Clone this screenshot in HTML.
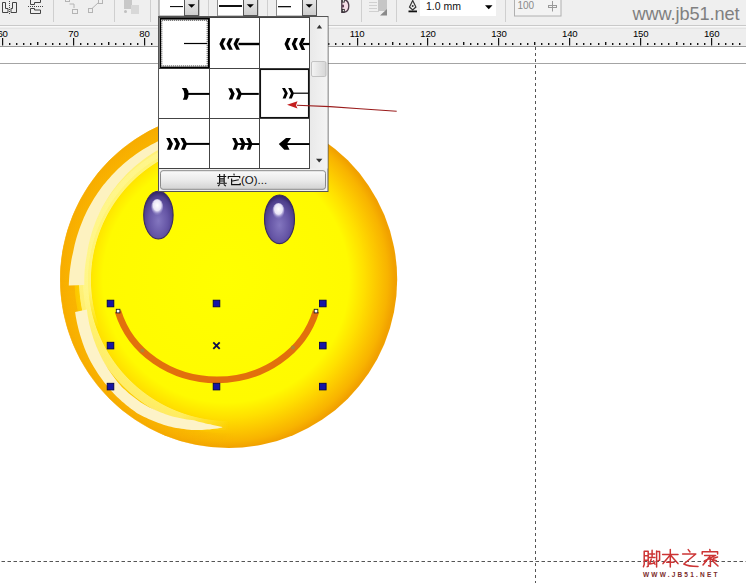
<!DOCTYPE html>
<html><head><meta charset="utf-8">
<style>
html,body{margin:0;padding:0;}
body{width:746px;height:583px;overflow:hidden;position:relative;background:#fff;font-family:"Liberation Sans",sans-serif;}
svg{position:absolute;left:0;top:0;display:block;}
</style></head><body>
<svg width="746" height="583" viewBox="0 0 746 583" style="font-family:'Liberation Sans',sans-serif">
<defs>
  <radialGradient id="face" cx="226" cy="279.5" r="168.5" gradientUnits="userSpaceOnUse">
    <stop offset="0" stop-color="#ffff00"/>
    <stop offset="0.73" stop-color="#fffa00"/>
    <stop offset="0.82" stop-color="#ffe000"/>
    <stop offset="0.9" stop-color="#fcc600"/>
    <stop offset="0.96" stop-color="#f8b300"/>
    <stop offset="1" stop-color="#f1a100"/>
  </radialGradient>
  <linearGradient id="ddbtn" x1="0" y1="0" x2="0" y2="1">
    <stop offset="0" stop-color="#e8e8e8"/>
    <stop offset="1" stop-color="#cdcdcd"/>
  </linearGradient>
</defs>

<!-- toolbar -->
<rect x="0" y="0" width="746" height="25" fill="#efefef"/>
<rect x="0" y="25" width="746" height="1" fill="#c9c9c9"/>
<rect x="0" y="26" width="746" height="1" fill="#f9f9f9"/>

<!-- toolbar icons -->
<g fill="none" stroke="#444" stroke-width="1">
  <path d="M2.5,2.5 H5.5 V8.5 H8 V12.5 H2.5 Z"/>
  <path d="M16.5,2.5 H12.5 V8.5 H11 V12.5 H16.5 Z"/>
  <path d="M9.5,1 V14" stroke-dasharray="1 1"/>
  <path d="M30.5,-1 V4.5 H34.5 V2.5 H40.5 V-1"/>
  <path d="M28,6.5 H43" stroke-dasharray="1 1"/>
  <path d="M30.5,8.5 H34.5 V10 H40.5 V13.5 H30.5 Z"/>
</g>
<g stroke="#cfcfcf" stroke-width="1"><path d="M53.5,0 V22 M114.5,0 V22 M150.5,0 V22 M208.5,0 V16 M258.5,0 V16 M267.5,0 V16 M361.5,0 V22 M396.5,0 V22 M505.5,0 V22"/></g>
<g fill="none" stroke="#b4b4b4" stroke-width="1">
  <rect x="65.5" y="-2.5" width="4" height="4"/>
  <path d="M69.5,4 H74 V8"/>
  <rect x="72.5" y="9.5" width="5" height="4"/>
  <rect x="88.5" y="8.5" width="4" height="4"/>
  <rect x="98.5" y="-0.5" width="4" height="4"/>
  <path d="M92,8.5 L98.5,2.5"/>
</g>
<g fill="#c8c8c8"><rect x="124" y="0" width="8" height="9"/><rect x="131" y="5" width="8" height="9" fill="#d8d8d8"/><circle cx="125.5" cy="11.5" r="1.5" fill="#c0c0c0"/></g>

<!-- dropdowns -->
<rect x="159" y="-1" width="40" height="17" fill="#fff" stroke="#8c8c8c" stroke-width="1"/>
<rect x="170" y="6" width="13" height="1.1" fill="#111"/>
<rect x="184.5" y="-1" width="14" height="16.5" fill="url(#ddbtn)" stroke="#555" stroke-width="1"/>
<path d="M188,4.3 H195.2 L191.6,7.8 Z" fill="#000"/>

<rect x="217.5" y="-1" width="40" height="17" fill="#fff" stroke="#8c8c8c" stroke-width="1"/>
<rect x="219" y="5" width="23" height="2" fill="#111"/>
<rect x="243.5" y="-1" width="14" height="16.5" fill="url(#ddbtn)" stroke="#555" stroke-width="1"/>
<path d="M246.7,4.3 H253.9 L250.3,7.8 Z" fill="#000"/>

<rect x="276.5" y="-1" width="40" height="17" fill="#fff" stroke="#8c8c8c" stroke-width="1"/>
<rect x="278" y="6" width="13" height="1.3" fill="#111"/>
<rect x="302.5" y="-1" width="14" height="16.5" fill="url(#ddbtn)" stroke="#555" stroke-width="1"/>
<path d="M305.6,4.3 H312.8 L309.2,7.8 Z" fill="#000"/>

<!-- misc toolbar -->
<path d="M341.8,-0.5 V12.3 H344 Q348.8,11.5 348.8,6 Q348.8,0.5 344,-0.5 Z" fill="#f3dde6" stroke="#4a3a48" stroke-width="1.3"/>
<rect x="342.3" y="-0.5" width="2" height="2.6" fill="#fff" stroke="#2a2a2a" stroke-width="0.9"/>
<rect x="342.3" y="9.4" width="2" height="2.4" fill="#fff" stroke="#2a2a2a" stroke-width="0.9"/>
<ellipse cx="343" cy="6" rx="1.1" ry="1.6" fill="#5a3a50"/>
<g fill="#c6c6c6"><rect x="378" y="0" width="9" height="11"/><path d="M380,15.5 L387,9 L387,15.5 Z" fill="#8a8a8a"/></g>
<g stroke="#d0d0d0"><path d="M369,2.5 H377 M369,5.5 H377 M369,8.5 H377 M369,11.5 H379"/></g>
<path d="M412.7,0.5 L409.5,7 L412.7,10 L415.9,7 Z" fill="none" stroke="#333" stroke-width="1.2"/>
<circle cx="412.7" cy="6" r="1" fill="#333"/>
<rect x="408.5" y="10.5" width="8.5" height="1.8" fill="#111"/>
<rect x="420" y="-1" width="76" height="17" fill="#fff"/>
<text x="426" y="10.2" font-size="10.5" fill="#111">1.0 mm</text>
<path d="M485,5.3 H492.5 L488.75,9.2 Z" fill="#000"/>
<rect x="514.5" y="-1" width="46.5" height="17" fill="#f3f3f3" stroke="#b0b0b0" stroke-width="1"/>
<text x="517.5" y="8.8" font-size="10" fill="#8a8a8a">100</text>
<g stroke="#999" stroke-width="1" fill="none"><path d="M552.5,1 V11.5"/><rect x="548.5" y="5.5" width="8" height="2"/></g>

<text x="632.5" y="19.6" font-size="18.2" fill="#808080" letter-spacing="-0.1">www.jb51.net</text>

<!-- ruler -->
<rect x="0" y="27" width="746" height="19" fill="#eeeeee"/>
<rect x="0" y="28" width="746" height="1" fill="#e4e4e4"/>
<rect x="0" y="46" width="746" height="1" fill="#999999"/>
<g font-size="9.6" fill="#000" letter-spacing="-0.2">
<text x="2.6" y="36.9" text-anchor="middle">60</text>
<text x="73.5" y="36.9" text-anchor="middle">70</text>
<text x="144.4" y="36.9" text-anchor="middle">80</text>
<text x="215.3" y="36.9" text-anchor="middle">90</text>
<text x="286.2" y="36.9" text-anchor="middle">100</text>
<text x="357.1" y="36.9" text-anchor="middle">110</text>
<text x="428.0" y="36.9" text-anchor="middle">120</text>
<text x="498.9" y="36.9" text-anchor="middle">130</text>
<text x="569.8" y="36.9" text-anchor="middle">140</text>
<text x="640.7" y="36.9" text-anchor="middle">150</text>
<text x="711.6" y="36.9" text-anchor="middle">160</text>
</g>
<rect x="2" y="38" width="1.2" height="7.5" fill="#111"/>
<rect x="9" y="43" width="1.4" height="2" fill="#111"/>
<rect x="16" y="43" width="1.4" height="2" fill="#111"/>
<rect x="23" y="43" width="1.4" height="2" fill="#111"/>
<rect x="30" y="43" width="1.4" height="2" fill="#111"/>
<rect x="37" y="42" width="1.4" height="3" fill="#111"/>
<rect x="45" y="43" width="1.4" height="2" fill="#111"/>
<rect x="52" y="43" width="1.4" height="2" fill="#111"/>
<rect x="59" y="43" width="1.4" height="2" fill="#111"/>
<rect x="66" y="43" width="1.4" height="2" fill="#111"/>
<rect x="73" y="38" width="1.2" height="7.5" fill="#111"/>
<rect x="80" y="43" width="1.4" height="2" fill="#111"/>
<rect x="87" y="43" width="1.4" height="2" fill="#111"/>
<rect x="94" y="43" width="1.4" height="2" fill="#111"/>
<rect x="101" y="43" width="1.4" height="2" fill="#111"/>
<rect x="108" y="42" width="1.4" height="3" fill="#111"/>
<rect x="115" y="43" width="1.4" height="2" fill="#111"/>
<rect x="123" y="43" width="1.4" height="2" fill="#111"/>
<rect x="130" y="43" width="1.4" height="2" fill="#111"/>
<rect x="137" y="43" width="1.4" height="2" fill="#111"/>
<rect x="144" y="38" width="1.2" height="7.5" fill="#111"/>
<rect x="151" y="43" width="1.4" height="2" fill="#111"/>
<rect x="158" y="43" width="1.4" height="2" fill="#111"/>
<rect x="165" y="43" width="1.4" height="2" fill="#111"/>
<rect x="172" y="43" width="1.4" height="2" fill="#111"/>
<rect x="179" y="42" width="1.4" height="3" fill="#111"/>
<rect x="186" y="43" width="1.4" height="2" fill="#111"/>
<rect x="193" y="43" width="1.4" height="2" fill="#111"/>
<rect x="201" y="43" width="1.4" height="2" fill="#111"/>
<rect x="208" y="43" width="1.4" height="2" fill="#111"/>
<rect x="215" y="38" width="1.2" height="7.5" fill="#111"/>
<rect x="222" y="43" width="1.4" height="2" fill="#111"/>
<rect x="229" y="43" width="1.4" height="2" fill="#111"/>
<rect x="236" y="43" width="1.4" height="2" fill="#111"/>
<rect x="243" y="43" width="1.4" height="2" fill="#111"/>
<rect x="250" y="42" width="1.4" height="3" fill="#111"/>
<rect x="257" y="43" width="1.4" height="2" fill="#111"/>
<rect x="264" y="43" width="1.4" height="2" fill="#111"/>
<rect x="271" y="43" width="1.4" height="2" fill="#111"/>
<rect x="279" y="43" width="1.4" height="2" fill="#111"/>
<rect x="286" y="38" width="1.2" height="7.5" fill="#111"/>
<rect x="293" y="43" width="1.4" height="2" fill="#111"/>
<rect x="300" y="43" width="1.4" height="2" fill="#111"/>
<rect x="307" y="43" width="1.4" height="2" fill="#111"/>
<rect x="314" y="43" width="1.4" height="2" fill="#111"/>
<rect x="321" y="42" width="1.4" height="3" fill="#111"/>
<rect x="328" y="43" width="1.4" height="2" fill="#111"/>
<rect x="335" y="43" width="1.4" height="2" fill="#111"/>
<rect x="342" y="43" width="1.4" height="2" fill="#111"/>
<rect x="349" y="43" width="1.4" height="2" fill="#111"/>
<rect x="357" y="38" width="1.2" height="7.5" fill="#111"/>
<rect x="364" y="43" width="1.4" height="2" fill="#111"/>
<rect x="371" y="43" width="1.4" height="2" fill="#111"/>
<rect x="378" y="43" width="1.4" height="2" fill="#111"/>
<rect x="385" y="43" width="1.4" height="2" fill="#111"/>
<rect x="392" y="42" width="1.4" height="3" fill="#111"/>
<rect x="399" y="43" width="1.4" height="2" fill="#111"/>
<rect x="406" y="43" width="1.4" height="2" fill="#111"/>
<rect x="413" y="43" width="1.4" height="2" fill="#111"/>
<rect x="420" y="43" width="1.4" height="2" fill="#111"/>
<rect x="427" y="38" width="1.2" height="7.5" fill="#111"/>
<rect x="434" y="43" width="1.4" height="2" fill="#111"/>
<rect x="442" y="43" width="1.4" height="2" fill="#111"/>
<rect x="449" y="43" width="1.4" height="2" fill="#111"/>
<rect x="456" y="43" width="1.4" height="2" fill="#111"/>
<rect x="463" y="42" width="1.4" height="3" fill="#111"/>
<rect x="470" y="43" width="1.4" height="2" fill="#111"/>
<rect x="477" y="43" width="1.4" height="2" fill="#111"/>
<rect x="484" y="43" width="1.4" height="2" fill="#111"/>
<rect x="491" y="43" width="1.4" height="2" fill="#111"/>
<rect x="498" y="38" width="1.2" height="7.5" fill="#111"/>
<rect x="505" y="43" width="1.4" height="2" fill="#111"/>
<rect x="512" y="43" width="1.4" height="2" fill="#111"/>
<rect x="520" y="43" width="1.4" height="2" fill="#111"/>
<rect x="527" y="43" width="1.4" height="2" fill="#111"/>
<rect x="534" y="42" width="1.4" height="3" fill="#111"/>
<rect x="541" y="43" width="1.4" height="2" fill="#111"/>
<rect x="548" y="43" width="1.4" height="2" fill="#111"/>
<rect x="555" y="43" width="1.4" height="2" fill="#111"/>
<rect x="562" y="43" width="1.4" height="2" fill="#111"/>
<rect x="569" y="38" width="1.2" height="7.5" fill="#111"/>
<rect x="576" y="43" width="1.4" height="2" fill="#111"/>
<rect x="583" y="43" width="1.4" height="2" fill="#111"/>
<rect x="590" y="43" width="1.4" height="2" fill="#111"/>
<rect x="598" y="43" width="1.4" height="2" fill="#111"/>
<rect x="605" y="42" width="1.4" height="3" fill="#111"/>
<rect x="612" y="43" width="1.4" height="2" fill="#111"/>
<rect x="619" y="43" width="1.4" height="2" fill="#111"/>
<rect x="626" y="43" width="1.4" height="2" fill="#111"/>
<rect x="633" y="43" width="1.4" height="2" fill="#111"/>
<rect x="640" y="38" width="1.2" height="7.5" fill="#111"/>
<rect x="647" y="43" width="1.4" height="2" fill="#111"/>
<rect x="654" y="43" width="1.4" height="2" fill="#111"/>
<rect x="661" y="43" width="1.4" height="2" fill="#111"/>
<rect x="668" y="43" width="1.4" height="2" fill="#111"/>
<rect x="676" y="42" width="1.4" height="3" fill="#111"/>
<rect x="683" y="43" width="1.4" height="2" fill="#111"/>
<rect x="690" y="43" width="1.4" height="2" fill="#111"/>
<rect x="697" y="43" width="1.4" height="2" fill="#111"/>
<rect x="704" y="43" width="1.4" height="2" fill="#111"/>
<rect x="711" y="38" width="1.2" height="7.5" fill="#111"/>
<rect x="718" y="43" width="1.4" height="2" fill="#111"/>
<rect x="725" y="43" width="1.4" height="2" fill="#111"/>
<rect x="732" y="43" width="1.4" height="2" fill="#111"/>
<rect x="739" y="43" width="1.4" height="2" fill="#111"/>
<rect x="746" y="42" width="1.4" height="3" fill="#111"/>

<!-- canvas lines -->
<rect x="0" y="63" width="746" height="1" fill="#a4a4a4"/>
<line x1="535.5" y1="47" x2="535.5" y2="583" stroke="#555" stroke-width="1" stroke-dasharray="3 3"/>
<line x1="1.5" y1="561.5" x2="746" y2="561.5" stroke="#555" stroke-width="1" stroke-dasharray="3.5 2.5"/>

<!-- smiley -->
<circle cx="228.7" cy="279.5" r="168.5" fill="url(#face)"/>
</svg>
<div style="position:absolute;left:58.10px;top:108.90px;width:341.20px;height:341.20px;background:conic-gradient(rgba(248,174,0,0.4) 2.0deg, rgba(248,174,0,0) 20.0deg, rgba(248,174,0,0) 89.9deg, rgba(248,174,0,0) 90.0deg, rgba(248,174,0,0) 178.0deg, rgba(248,174,0,0.6) 205.0deg, rgba(248,174,0,0.75) 270.0deg, rgba(248,174,0,0.75) 330.0deg);-webkit-mask-image:radial-gradient(circle at center, transparent 153.60px, #000 154.40px, #000 168.20px, transparent 169.00px);mask-image:radial-gradient(circle at center, transparent 153.60px, #000 154.40px, #000 168.20px, transparent 169.00px);"></div>
<div style="position:absolute;left:80.70px;top:131.50px;width:296.00px;height:296.00px;background:conic-gradient(rgba(255,246,140,0.85) 0.0deg, rgba(255,246,140,0) 20.0deg, rgba(255,246,140,0) 89.9deg, rgba(255,246,140,0) 90.0deg, rgba(255,246,140,0) 250.0deg, rgba(255,246,140,0.85) 266.0deg);-webkit-mask-image:radial-gradient(circle at center, transparent 137.60px, #000 138.40px, #000 145.60px, transparent 146.40px);mask-image:radial-gradient(circle at center, transparent 137.60px, #000 138.40px, #000 145.60px, transparent 146.40px);"></div>
<div style="position:absolute;left:76.70px;top:127.50px;width:304.00px;height:304.00px;background:conic-gradient(rgba(255,246,140,0) 89.9deg, rgba(255,246,140,0) 90.0deg, rgba(255,246,140,0) 180.0deg, rgba(255,246,140,0.7) 200.0deg, rgba(255,246,140,0.8) 258.0deg, rgba(255,246,140,0.85) 266.0deg);-webkit-mask-image:radial-gradient(circle at center, transparent 140.60px, #000 141.40px, #000 149.60px, transparent 150.40px);mask-image:radial-gradient(circle at center, transparent 140.60px, #000 141.40px, #000 149.60px, transparent 150.40px);"></div>
<svg width="746" height="583" viewBox="0 0 746 583" style="font-family:'Liberation Sans',sans-serif">
<defs>
  <radialGradient id="eye" cx="0.5" cy="0.62" r="0.6">
    <stop offset="0" stop-color="#8376bf"/>
    <stop offset="0.55" stop-color="#6555a5"/>
    <stop offset="0.85" stop-color="#4e3f8c"/>
    <stop offset="1" stop-color="#34266a"/>
  </radialGradient>
  <radialGradient id="eyehl" cx="0.5" cy="0.4" r="0.55">
    <stop offset="0" stop-color="#ffffff"/>
    <stop offset="0.6" stop-color="#e8e4f6"/>
    <stop offset="1" stop-color="#b0a8dc" stop-opacity="0.2"/>
  </radialGradient>
  <linearGradient id="btn" x1="0" y1="0" x2="0" y2="1">
    <stop offset="0" stop-color="#fafafa"/>
    <stop offset="0.5" stop-color="#ebebeb"/>
    <stop offset="1" stop-color="#d2d2d2"/>
  </linearGradient>
  <linearGradient id="sb" x1="0" y1="0" x2="1" y2="0">
    <stop offset="0" stop-color="#e9e9e9"/>
    <stop offset="1" stop-color="#f4f4f4"/>
  </linearGradient>
  <linearGradient id="thumb" x1="0" y1="0" x2="1" y2="0">
    <stop offset="0" stop-color="#f4f4f4"/>
    <stop offset="1" stop-color="#d6d6d6"/>
  </linearGradient>
</defs>
<path d="M68.8,285.6 L68.9,282.4 L69.1,279.2 L69.3,276.0 L69.6,272.8 L70.0,269.6 L70.4,266.4 L70.9,263.3 L71.4,260.1 L72.0,257.0 L72.7,253.9 L73.4,250.8 L74.0,247.7 L74.7,244.6 L75.5,241.5 L76.3,238.4 L77.2,235.4 L78.2,232.4 L79.2,229.4 L80.3,226.4 L81.5,223.4 L82.7,220.5 L83.9,217.6 L85.2,214.7 L86.6,211.8 L88.0,209.0 L89.5,206.2 L91.1,203.5 L92.7,200.7 L94.3,198.0 L96.0,195.4 L97.8,192.8 L99.6,190.2 L101.5,187.6 L103.4,185.1 L105.4,182.7 L107.4,180.2 L109.5,177.9 L111.6,175.5 L113.8,173.3 L116.0,171.0 L118.2,168.8 L120.5,166.7 L122.9,164.6 L125.2,162.5 L127.7,160.5 L130.1,158.6 L132.6,156.7 L135.2,154.8 L137.7,153.0 L140.3,151.3 L143.0,149.6 L145.6,147.9 L148.3,146.4 L151.1,144.8 L153.8,143.4 L156.6,141.9 L159.4,140.6 L162.3,139.3 L165.1,138.0 L168.0,136.8 L170.9,135.7 L173.8,134.6 L176.8,133.6 L179.7,132.6 L182.7,131.7 L185.7,130.9 L188.7,130.1 L191.7,129.3 L194.8,128.7 L197.8,128.1 L200.9,127.5 L204.0,127.1 L207.0,126.7 L210.1,126.3 L213.2,126.0 L216.3,125.8 L219.4,125.6 L222.5,125.5 L225.6,125.5 L228.7,125.5 L228.7,131.5 L225.7,131.5 L222.7,131.6 L219.8,131.8 L216.8,132.0 L213.8,132.3 L210.9,132.7 L207.9,133.1 L205.0,133.5 L202.1,134.0 L199.2,134.6 L196.3,135.3 L193.4,135.9 L190.5,136.7 L187.6,137.5 L184.8,138.4 L182.0,139.3 L179.1,140.3 L176.4,141.3 L173.6,142.4 L170.9,143.6 L168.1,144.8 L165.4,146.0 L162.8,147.4 L160.2,148.8 L157.6,150.2 L155.0,151.7 L152.5,153.3 L150.0,154.9 L147.6,156.6 L145.2,158.3 L142.8,160.1 L140.4,161.9 L138.1,163.7 L135.9,165.6 L133.6,167.6 L131.5,169.5 L129.3,171.6 L127.2,173.6 L125.1,175.8 L123.1,177.9 L121.2,180.1 L119.2,182.3 L117.3,184.6 L115.5,186.9 L113.7,189.2 L112.0,191.6 L110.3,194.0 L108.7,196.4 L107.1,198.9 L105.6,201.4 L104.1,204.0 L102.7,206.5 L101.3,209.1 L100.0,211.8 L98.8,214.4 L97.6,217.1 L96.4,219.8 L95.3,222.5 L94.3,225.2 L93.3,227.9 L92.4,230.7 L91.5,233.5 L90.7,236.3 L90.0,239.1 L89.3,241.9 L88.6,244.7 L88.1,247.6 L87.5,250.4 L87.1,253.3 L86.6,256.2 L86.1,259.0 L85.7,261.9 L85.3,264.8 L85.0,267.6 L84.7,270.5 L84.5,273.4 L84.4,276.3 L84.3,279.2 L84.3,282.1 L84.3,285.0 Z" fill="#fdf2c0"/>
<path d="M222.2,427.6 L219.8,428.0 L217.3,428.4 L214.8,428.8 L212.2,429.1 L209.7,429.4 L207.2,429.6 L204.6,429.8 L202.0,429.9 L199.5,430.0 L196.9,430.0 L194.3,430.0 L191.7,429.9 L189.1,429.7 L186.5,429.4 L183.9,429.1 L181.4,428.7 L178.8,428.3 L176.2,427.9 L173.6,427.4 L171.0,426.8 L168.5,426.2 L166.0,425.5 L163.4,424.7 L160.9,423.8 L158.5,422.9 L156.0,422.0 L153.5,421.0 L151.1,420.0 L148.6,418.9 L146.2,417.8 L143.8,416.7 L141.4,415.5 L139.0,414.3 L136.7,412.9 L134.6,411.3 L132.4,409.8 L130.3,408.2 L128.2,406.5 L126.1,404.9 L124.0,403.1 L122.0,401.4 L120.0,399.6 L118.0,397.8 L116.1,396.0 L114.2,394.1 L112.4,392.1 L110.6,390.2 L108.9,388.1 L107.2,386.1 L105.5,384.0 L103.9,381.9 L102.3,379.8 L100.7,377.6 L99.2,375.4 L97.7,373.2 L96.3,371.0 L94.9,368.8 L93.5,366.5 L92.2,364.2 L90.9,361.9 L89.6,359.6 L88.5,357.2 L87.4,354.8 L86.3,352.4 L85.3,349.9 L84.3,347.5 L83.4,345.0 L82.5,342.5 L81.7,340.0 L80.9,337.6 L80.1,335.0 L79.4,332.5 L78.7,330.0 L78.1,327.5 L77.5,324.9 L76.9,322.4 L76.4,319.8 L75.9,317.3 L75.5,314.7 L75.1,312.1 L86.9,309.6 L87.2,312.0 L87.5,314.4 L87.9,316.8 L88.4,319.1 L88.8,321.5 L89.3,323.9 L89.9,326.2 L90.5,328.6 L91.1,330.9 L91.8,333.3 L92.5,335.6 L93.2,337.9 L94.0,340.2 L94.9,342.5 L95.7,344.8 L96.6,347.1 L97.6,349.3 L98.6,351.6 L99.6,353.8 L100.7,356.0 L101.8,358.2 L103.0,360.4 L104.2,362.5 L105.5,364.7 L106.8,366.8 L108.1,368.9 L109.5,370.9 L110.9,373.0 L112.3,375.0 L113.8,377.0 L115.3,379.0 L116.8,381.0 L118.4,382.9 L120.0,384.8 L121.6,386.7 L123.4,388.4 L125.3,390.1 L127.1,391.7 L129.0,393.4 L131.0,395.0 L132.9,396.5 L134.9,398.1 L136.9,399.6 L138.9,401.0 L140.9,402.4 L143.0,403.8 L145.1,405.1 L147.3,406.3 L149.5,407.4 L151.8,408.5 L154.0,409.5 L156.3,410.6 L158.6,411.5 L160.9,412.4 L163.2,413.3 L165.5,414.2 L167.8,415.0 L170.1,415.8 L172.5,416.5 L174.8,417.1 L177.2,417.6 L179.6,418.1 L182.0,418.6 L184.4,419.0 L186.9,419.4 L189.3,419.7 L191.7,420.0 L194.0,420.3 L196.3,421.0 L198.6,421.7 L201.0,422.3 L203.3,422.8 L205.6,423.4 L208.0,423.9 L210.4,424.3 L212.7,424.9 L215.1,425.5 L217.5,426.0 L219.9,426.5 L222.3,427.0 Z" fill="#fdf3c8"/>
<ellipse cx="158.4" cy="215.1" rx="14.7" ry="23.9" fill="url(#eye)" stroke="#3a2a60" stroke-width="1.1"/>
<ellipse cx="157.2" cy="207" rx="6" ry="8" fill="url(#eyehl)"/>
<ellipse cx="279.5" cy="219.3" rx="15" ry="24.3" fill="url(#eye)" stroke="#3a2a60" stroke-width="1.1"/>
<ellipse cx="278.5" cy="210.7" rx="6" ry="7.8" fill="url(#eyehl)"/>

<path d="M118,311.2 A102.7,93.5 0 0 0 316,311.2" fill="none" stroke="#e2700c" stroke-width="6.6"/>
<rect x="116.3" y="309.3" width="3.6" height="3.6" fill="#fff" stroke="#222" stroke-width="0.9"/>
<rect x="314.2" y="309.3" width="3.6" height="3.6" fill="#fff" stroke="#222" stroke-width="0.9"/>
<rect x="140.5" y="348.7" width="3.6" height="3.6" fill="#a08a40" opacity="0.85"/>
<rect x="291.2" y="345.8" width="3.6" height="3.6" fill="#a08a40" opacity="0.85"/>
<rect x="107.2" y="300.2" width="6.6" height="6.6" fill="#1515a6" stroke="#00004a" stroke-width="0.9"/>
<rect x="107.2" y="342.3" width="6.6" height="6.6" fill="#1515a6" stroke="#00004a" stroke-width="0.9"/>
<rect x="107.2" y="383.3" width="6.6" height="6.6" fill="#1515a6" stroke="#00004a" stroke-width="0.9"/>
<rect x="213.2" y="300.2" width="6.6" height="6.6" fill="#1515a6" stroke="#00004a" stroke-width="0.9"/>
<rect x="213.2" y="383.3" width="6.6" height="6.6" fill="#1515a6" stroke="#00004a" stroke-width="0.9"/>
<rect x="319.5" y="300.2" width="6.6" height="6.6" fill="#1515a6" stroke="#00004a" stroke-width="0.9"/>
<rect x="319.5" y="342.3" width="6.6" height="6.6" fill="#1515a6" stroke="#00004a" stroke-width="0.9"/>
<rect x="319.5" y="383.3" width="6.6" height="6.6" fill="#1515a6" stroke="#00004a" stroke-width="0.9"/>
<path d="M213.3,342.4 L219.7,348.8 M219.7,342.4 L213.3,348.8" stroke="#10104a" stroke-width="1.9"/>

<!-- popup -->
<rect x="158.5" y="16.5" width="169.5" height="175" fill="#f0f0f0" stroke="#555" stroke-width="1"/>
<rect x="159" y="17.5" width="150.5" height="151" fill="#fff"/>
<g stroke="#444" stroke-width="1">
  <path d="M159,17.5 H310"/>
  <path d="M209.5,17.5 V168.5 M259.5,17.5 V168.5 M309.5,17.5 V168.5"/>
  <path d="M159,68.5 H310 M159,118.5 H310 M159,168.5 H310"/>
</g>
<rect x="160.3" y="18.8" width="48.4" height="48.6" fill="none" stroke="#000" stroke-width="1.6"/>
<rect x="161.8" y="20.3" width="45.4" height="45.6" fill="none" stroke="#333" stroke-width="1" stroke-dasharray="1 1"/>
<rect x="260.5" y="69.5" width="48" height="48" fill="none" stroke="#111" stroke-width="1.1"/>
<g fill="#000">
<rect x="184" y="42.9" width="23" height="1.2"/>
<path d="M219.40,44.00 L222.20,38.25 L225.80,38.25 L223.00,44.00 L225.80,49.75 L222.20,49.75 Z"/>
<path d="M226.45,44.00 L229.25,38.25 L232.85,38.25 L230.05,44.00 L232.85,49.75 L229.25,49.75 Z"/>
<path d="M233.50,44.00 L236.30,38.25 L239.90,38.25 L237.10,44.00 L239.90,49.75 L236.30,49.75 Z"/>
<rect x="238.5" y="42.8" width="20.8" height="2.4"/>
<path d="M284.50,44.00 L287.20,38.10 L290.70,38.10 L288.00,44.00 L290.70,49.90 L287.20,49.90 Z"/>
<path d="M291.75,44.00 L294.45,38.10 L297.95,38.10 L295.25,44.00 L297.95,49.90 L294.45,49.90 Z"/>
<path d="M299.00,44.00 L301.70,38.10 L305.20,38.10 L302.50,44.00 L305.20,49.90 L301.70,49.90 Z"/>
<rect x="303" y="42.9" width="6.5" height="2.2"/>
<path d="M181.8,87.9 L186.4,88.1 Q189,91 188.6,94 Q188.8,97 187,99.7 L182.8,99.7 Q184.6,97 184.3,94 Q184.2,90.5 181.8,87.9 Z"/>
<rect x="186.5" y="92.9" width="23" height="2"/>
<path d="M228.20,88.15 L231.80,88.15 L234.70,93.80 L232.40,99.45 L228.80,99.45 L231.10,93.80 Z"/>
<path d="M235.40,88.15 L239.00,88.15 L241.90,93.80 L239.60,99.45 L236.00,99.45 L238.30,93.80 Z"/>
<rect x="240.5" y="92.9" width="18.3" height="2"/>
<path d="M282.00,88.10 L285.00,88.10 L287.80,93.30 L285.60,98.50 L282.60,98.50 L284.80,93.30 Z"/>
<path d="M288.20,88.10 L291.20,88.10 L294.00,93.30 L291.80,98.50 L288.80,98.50 L291.00,93.30 Z"/>
<rect x="293.5" y="92.6" width="15" height="1.2"/>
<path d="M166.20,137.90 L169.90,137.90 L173.00,143.80 L170.50,149.70 L166.80,149.70 L169.30,143.80 Z"/>
<path d="M173.25,137.90 L176.95,137.90 L180.05,143.80 L177.55,149.70 L173.85,149.70 L176.35,143.80 Z"/>
<path d="M180.30,137.90 L184.00,137.90 L187.10,143.80 L184.60,149.70 L180.90,149.70 L183.40,143.80 Z"/>
<rect x="186" y="142.9" width="23.5" height="2"/>
<rect x="235.7" y="143.1" width="23.5" height="1.9"/>
<path d="M232.10,137.90 L235.60,137.90 L238.40,143.80 L236.20,149.70 L232.70,149.70 L234.90,143.80 Z"/>
<path d="M239.15,137.90 L242.65,137.90 L245.45,143.80 L243.25,149.70 L239.75,149.70 L241.95,143.80 Z"/>
<path d="M246.20,137.90 L249.70,137.90 L252.50,143.80 L250.30,149.70 L246.80,149.70 L249.00,143.80 Z"/>
<path d="M278.8,144 L286,138.1 L291,138.1 L286.7,144 L289.5,149.8 L284.3,149.8 Z"/>
<rect x="285.5" y="143.1" width="24" height="1.9"/>
</g>
<!-- scrollbar -->
<rect x="310" y="17.5" width="17.5" height="151" fill="url(#sb)"/>
<path d="M316.7,28.4 L319.4,24.8 L322.1,28.4 Z" fill="#333"/>
<rect x="311.5" y="61.5" width="14.5" height="15" rx="1.5" fill="url(#thumb)" stroke="#b8b8b8" stroke-width="0.8"/>
<path d="M316,158.8 H322.4 L319.2,162.4 Z" fill="#333"/>
<!-- button -->
<rect x="160.5" y="170.7" width="165" height="18.6" rx="2.5" fill="url(#btn)" stroke="#8a8a8a" stroke-width="1"/>
<g fill="none" stroke="#111" stroke-width="1.15">
  <path d="M217.3,176.5 H226.3 M219.6,174 V183 M224.2,174 V183 M219.6,178.8 H224.2 M219.6,181 H224.2 M217,183.2 H226.8 M219.8,184.3 L218,186.2 M223.8,184.3 L225.8,186.2"/>
  <path d="M233.8,173.6 L234.3,175.3 M228.3,178.8 V176.5 H239.7 V178.3 M231.3,181.3 L238.8,179.8 M231.6,178.6 V184.6 H240.2 V183"/>
</g>
<text x="241" y="184.4" font-size="11.5" fill="#111">(O)...</text>

<!-- red arrow -->
<path d="M297,105.3 L330,106.6 L360,108.8 L396.7,111.3" fill="none" stroke="#9a1c1c" stroke-width="1.1"/>
<path d="M287,104.8 L297.5,101.3 L296,105.3 L297.5,108.6 Z" fill="#c41e1e"/>

<!-- watermark bottom -->
<g fill="none" stroke="#cc3434" stroke-width="1.5" stroke-linecap="round" stroke-linejoin="round">
  <path d="M644.2,551.2 V564.5 L643.4,566.8 M644.2,551.2 H648.2 V566.2 L647.2,566.6 M644.4,555.8 H648 M644.4,560.2 H648"/>
  <path d="M649.6,554 H654.6 M652.1,550.2 V557.2 M649.2,557.6 H655 M651.2,559.2 L649.6,564 L654.8,563 M653.6,560.8 L655,564.2"/>
  <path d="M656.6,551 V567 M656.6,551.6 H659.6 V560.2 L658.2,560.6"/>
  <path d="M662.6,554.6 H678 M670.3,549.6 V567 M670,555.2 L663,563.6 M670.6,555.2 L678,563.6 M666.6,562.2 H674"/>
  <path d="M688.2,549.6 L690,552 M682.6,554 H695.8 L683.8,564 Q688,566.4 698,566.4"/>
  <path d="M709.8,549.4 L710.2,551.4 M702.2,554 V551.8 H717.6 V554 M704.6,555.4 H715.6 L704.4,561 M710,556.2 L703,565 M708.2,558 L716.4,560.8 M710.4,559 V566.4 L708.6,565.8 M712.4,560.6 L718,566 M713.6,558.2 L717.6,557"/>
</g>
<text x="643" y="577" font-size="6.5" fill="#7a2a2a" letter-spacing="2.2" font-weight="bold">WWW.JB51.NET</text>
</svg>
</body></html>
